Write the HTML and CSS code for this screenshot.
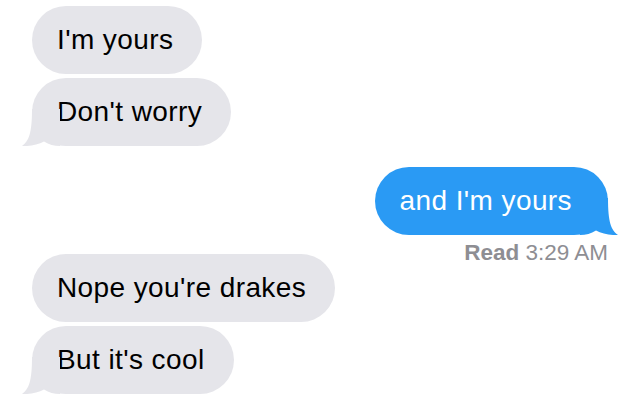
FILE: index.html
```html
<!DOCTYPE html>
<html lang="en">
<head>
    <meta charset="UTF-8">
    <meta name="viewport" content="width=device-width, initial-scale=1.0">
    <title>Messages</title>
    <link rel="stylesheet" href="styles.css">
</head>
<body>

    <div class="thread">
        <div class="msg in">I'm yours</div>
        <div class="msg in">Don't worry
            <svg class="tail" viewBox="0 0 38 37" aria-hidden="true"><path d="M10 0 C10 24 7 32 0 37 C8 37.5 16 35.5 22 32.5 C27 35.5 32 37 38 37 L38 0 Z"/></svg>
        </div>

        <div class="msg out">and I'm yours
            <svg class="tail" viewBox="0 0 38 37" aria-hidden="true"><path d="M10 0 C10 24 7 32 0 37 C8 37.5 16 35.5 22 32.5 C27 35.5 32 37 38 37 L38 0 Z"/></svg>
        </div>
        <div class="receipt"><b>Read</b> 3:29 AM</div>

        <div class="msg in">Nope you're drakes</div>
        <div class="msg in">But it's cool
            <svg class="tail" viewBox="0 0 38 37" aria-hidden="true"><path d="M10 0 C10 24 7 32 0 37 C8 37.5 16 35.5 22 32.5 C27 35.5 32 37 38 37 L38 0 Z"/></svg>
        </div>
    </div>

</body>
</html>
```

FILE: styles.css
```css
body {
    background-color: #ffffff;
    margin: 0;
    font-family: 'Liberation Sans', Arial, Helvetica, sans-serif;
}

.thread {
    display: flex;
    flex-direction: column;
    align-items: flex-start;
    gap: 4px;
    padding: 6px 25px 0 32px;
}

.msg {
    position: relative;
    height: 68px;
    line-height: 68px;
    padding: 0 29px 0 25px;
    border-radius: 34px;
    font-size: 28px;
    letter-spacing: 0.4px;
    white-space: nowrap;
}

.in {
    background-color: #e5e5ea;
    color: #000000;
}

.out {
    align-self: flex-end;
    margin-top: 17px;
    padding-right: 36px;
    background-color: #2a9af4;
    color: #ffffff;
}

.tail {
    position: absolute;
    bottom: 0;
    width: 38px;
    height: 37px;
}

.in .tail {
    left: -10px;
    fill: #e5e5ea;
}

.out .tail {
    right: -10px;
    fill: #2a9af4;
    transform: scaleX(-1);
}

.receipt {
    align-self: flex-end;
    margin: 3px 0 -14px 0;
    font-size: 22.5px;
    line-height: 22px;
    color: #8e8e93;
}
```
